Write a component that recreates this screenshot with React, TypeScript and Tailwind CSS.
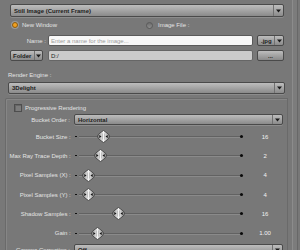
import React from 'react'

// render settings pane

const txt = "font-['Liberation_Sans',Arial,sans-serif] text-[6px] leading-none"

function Arrow() {
    return (
        <svg width="5" height="4" viewBox="0 0 5 4">
            <path d="M0 0.5 L5 0.5 L2.5 3.5 Z" fill="#1a1a1a" />
        </svg>
    )
}

function Dropdown({ label, className }: { label: string; className?: string }) {
    return (
        <div
            className={
                'flex shrink-0 items-stretch rounded-[2px] border border-[#4a4a4a] bg-gradient-to-b from-[#bdbdbd] via-[#a4a4a4] to-[#8a8a8a] shadow-[0_1px_0_#8c8c8c] ' +
                (className ?? '')
            }
        >
            <span className={txt + ' flex flex-1 items-center pl-[3px] font-bold text-[#1c1c1c]'}>{label}</span>
            <span className="flex w-[10px] items-center justify-center border-l border-[#707070]">
                <Arrow />
            </span>
        </div>
    )
}

function Thumb() {
    return (
        <svg width="13" height="13" viewBox="0 0 13 13">
            <defs>
                <linearGradient id="tg" x1="0" x2="1" y1="0" y2="0">
                    <stop offset="0" stopColor="#7a7a7a" />
                    <stop offset="0.3" stopColor="#c8c8c8" />
                    <stop offset="0.5" stopColor="#f4f4f4" />
                    <stop offset="0.7" stopColor="#c8c8c8" />
                    <stop offset="1" stopColor="#7a7a7a" />
                </linearGradient>
            </defs>
            <path
                d="M6.5 0.5 L10 3 Q12.5 4.8 12.5 6.5 Q12.5 8.2 10 10 L6.5 12.5 L3 10 Q0.5 8.2 0.5 6.5 Q0.5 4.8 3 3 Z"
                fill="url(#tg)"
                stroke="#3e3e3e"
                strokeWidth="0.8"
            />
            <path d="M4.5 6.5 L2.3 5 L2.3 8 Z" fill="#111" />
            <path d="M8.5 6.5 L10.7 5 L10.7 8 Z" fill="#111" />
            <path d="M5.5 3.5 L5.5 9.5 M7.5 3.5 L7.5 9.5" stroke="#9a9a9a" strokeWidth="0.5" />
        </svg>
    )
}

const sliders = [
    { label: 'Bucket Size', value: '16', pos: 18.5 },
    { label: 'Max Ray Trace Depth', value: '2', pos: 15.5 },
    { label: 'Pixel Samples (X)', value: '4', pos: 3.5 },
    { label: 'Pixel Samples (Y)', value: '4', pos: 3.5 },
    { label: 'Shadow Samples', value: '16', pos: 33.5 },
    { label: 'Gain', value: '1.00', pos: 12.5 },
]

function SliderRow({ label, value, pos }: { label: string; value: string; pos: number }) {
    return (
        <div className="flex h-[19.3px] shrink-0 items-center">
            <div className={txt + ' w-[65px] text-right text-[#e4e4e4]'}>{label} :</div>
            <div className="ml-[4px] h-[1px] w-[2px] bg-[#111]" />
            <div className="relative ml-[2px] flex h-[13px] w-[165px] items-center">
                <div className="h-[1px] flex-1 bg-[#626262] shadow-[0_1px_0_#8a8a8a]" />
                <div className="h-[3px] w-[3px] rounded-full bg-[#0a0a0a]" />
                <div className="absolute top-0" style={{ left: pos }}>
                    <Thumb />
                </div>
            </div>
            <div className={txt + ' w-[44px] text-center text-[#f2f2f2]'}>{value}</div>
        </div>
    )
}

export default function App() {
    return (
        <div className="flex h-[250px] w-[300px] overflow-hidden bg-[#787878]">
            <div className="flex w-[289px] flex-col">
                <Dropdown label="Still Image (Current Frame)" className="ml-[10px] mt-[4px] h-[13px] w-[274px]" />

                <div className="mt-[3px] flex h-[10px] shrink-0 items-center">
                    <div className="ml-[12px] h-[6px] w-[6px] rounded-full border border-[#8a5a10] bg-[#f0a020] shadow-[0_0_0_1px_#9a9a9a]" />
                    <span className={txt + ' ml-[4px] text-[#e4e4e4]'}>New Window</span>
                    <div className="ml-[89px] h-[7px] w-[7px] rounded-full border border-[#5a5a5a] bg-gradient-to-b from-[#6e6e6e] to-[#8e8e8e]" />
                    <span className={txt + ' ml-[5px] text-[#e4e4e4]'}>Image File :</span>
                </div>

                <div className="mt-[5px] flex h-[11px] shrink-0 items-center">
                    <span className={txt + ' w-[46px] text-right text-[#e4e4e4]'}>Name :</span>
                    <div className="ml-[2px] flex h-[11px] w-[205px] items-center rounded-[2px] border border-[#5a5a5a] bg-[#f7f7f7] pl-[2px]">
                        <span className={txt + ' text-[#9c9c9c]'}>Enter a name for the image...</span>
                    </div>
                    <div className="ml-[4px] flex h-[11px] w-[27px] items-stretch rounded-[2px] border border-[#4a4a4a] bg-gradient-to-b from-[#bdbdbd] to-[#8a8a8a]">
                        <span className={txt + ' flex flex-1 items-center pl-[3px] font-bold text-[#1c1c1c]'}>.jpg</span>
                        <span className="flex w-[9px] items-center justify-center border-l border-[#707070]">
                            <Arrow />
                        </span>
                    </div>
                </div>

                <div className="mt-[4px] flex h-[11px] shrink-0 items-center">
                    <div className="ml-[10px] flex h-[11px] w-[33px] items-stretch rounded-[2px] border border-[#4a4a4a] bg-gradient-to-b from-[#bdbdbd] to-[#8a8a8a]">
                        <span className={txt + ' flex flex-1 items-center pl-[2px] font-bold text-[#1c1c1c]'}>Folder</span>
                        <span className="flex w-[8px] items-center justify-center border-l border-[#707070]">
                            <Arrow />
                        </span>
                    </div>
                    <div className="ml-[5px] flex h-[11px] w-[205px] items-center rounded-[2px] border border-[#666] bg-[#cbcbcb] pl-[2px]">
                        <span className={txt + ' text-[#1c1c1c]'}>D:/</span>
                    </div>
                    <div className="ml-[4px] flex h-[11px] w-[27px] items-center justify-center rounded-[2px] border border-[#4a4a4a] bg-gradient-to-b from-[#bdbdbd] to-[#8a8a8a]">
                        <span className={txt + ' font-bold text-[#1c1c1c]'}>...</span>
                    </div>
                </div>

                <div className={txt + ' ml-[8px] mt-[10px] flex h-[8px] shrink-0 items-center text-[#e4e4e4]'}>Render Engine :</div>
                <Dropdown label="3Delight" className="ml-[8px] mt-[3px] h-[12px] w-[277px]" />

                <div className="ml-[5px] mt-[4px] flex min-h-0 w-[283px] flex-1 flex-col overflow-hidden rounded-tl-[2px] border-l border-t border-r border-[#6a6a6a] shadow-[inset_1px_1px_0_#868686]">
                    <div className="mt-[4px] flex h-[9px] shrink-0 items-center">
                        <div className="ml-[8px] h-[8px] w-[8px] border border-[#4e4e4e] bg-[#7c7c7c] shadow-[inset_1px_1px_0_#666]" />
                        <span className={txt + ' ml-[3px] text-[#e4e4e4]'}>Progressive Rendering</span>
                    </div>

                    <div className="mt-[2px] flex h-[11px] shrink-0 items-center">
                        <span className={txt + ' w-[64px] text-right text-[#e4e4e4]'}>Bucket Order :</span>
                        <Dropdown label="Horizontal" className="ml-[4px] h-[11px] w-[209px]" />
                    </div>

                    <div className="mt-[2px] flex shrink-0 flex-col">
                        {sliders.map((s) => (
                            <SliderRow key={s.label} {...s} />
                        ))}
                    </div>

                    <div className="mt-[1px] flex h-[12px] shrink-0 items-center">
                        <span className={txt + ' w-[64px] text-right text-[#e4e4e4]'}>Gamma Correction :</span>
                        <Dropdown label="Off" className="ml-[4px] h-[12px] w-[209px]" />
                    </div>
                </div>
            </div>
            <div className="flex w-[11px] justify-center">
                <div className="h-full w-[6px] border-l border-r border-l-[#8c8c8c] border-r-[#686868] bg-[#7c7c7c]" />
            </div>
        </div>
    )
}
